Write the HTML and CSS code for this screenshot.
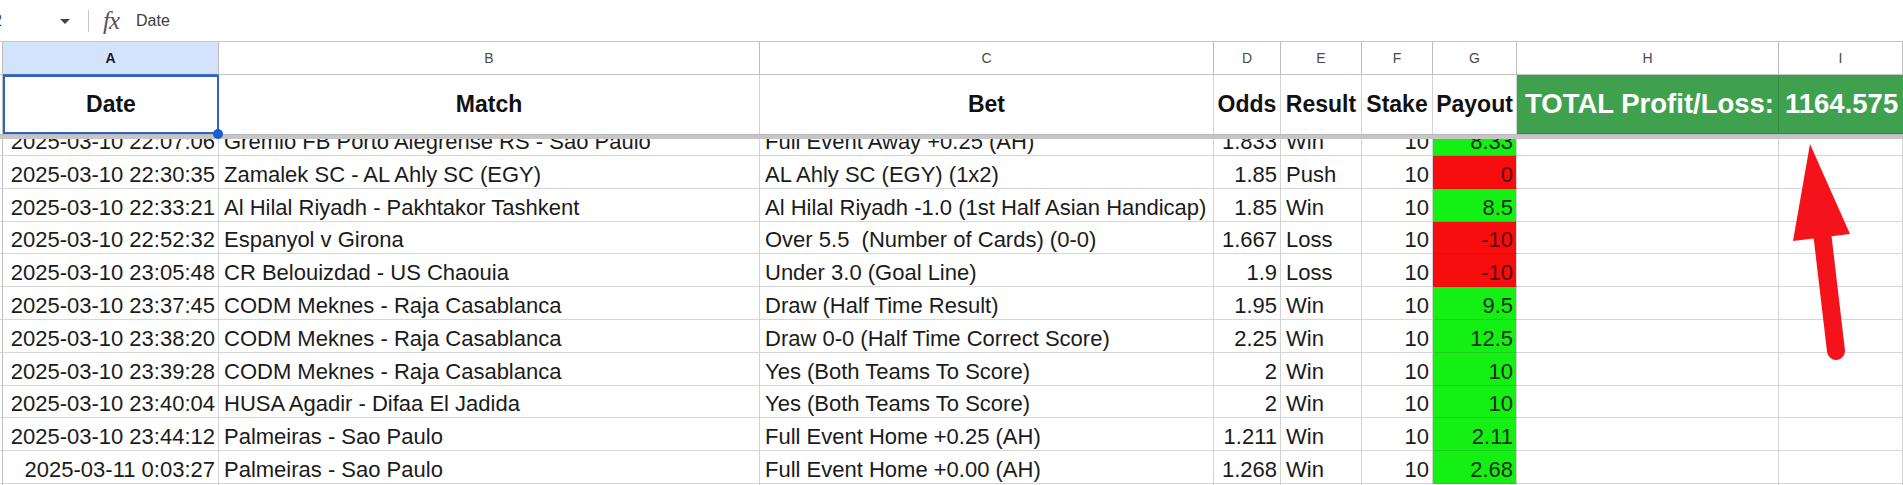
FILE: index.html
```html
<!DOCTYPE html>
<html>
<head>
<meta charset="utf-8">
<link rel="stylesheet" href="styles.css">
</head>
<body>
<div class="page">
  <div class="toolbar">
    <span class="namebox">2</span>
    <span class="caret"></span>
    <span class="vsep"></span>
    <span class="fx">fx</span>
    <span class="formula">Date</span>
  </div>

  <div class="row colhead">
    <div class="cell stub"></div>
    <div class="cell sel">A</div>
    <div class="cell">B</div>
    <div class="cell">C</div>
    <div class="cell">D</div>
    <div class="cell">E</div>
    <div class="cell">F</div>
    <div class="cell">G</div>
    <div class="cell">H</div>
    <div class="cell">I</div>
  </div>

  <div class="row head">
    <div class="cell stub"></div>
    <div class="cell active">Date<span class="handle"></span></div>
    <div class="cell">Match</div>
    <div class="cell">Bet</div>
    <div class="cell">Odds</div>
    <div class="cell">Result</div>
    <div class="cell">Stake</div>
    <div class="cell">Payout</div>
    <div class="cell total">TOTAL Profit/Loss:</div>
    <div class="cell total val">1164.575</div>
  </div>
  <div class="freeze"></div>

  <div class="body">
    <div class="row data first">
      <div class="cell stub"></div>
      <div class="cell r">2025-03-10 22:07:06</div>
      <div class="cell">Gremio FB Porto Alegrense RS - Sao Paulo</div>
      <div class="cell">Full Event Away +0.25 (AH)</div>
      <div class="cell r">1.833</div>
      <div class="cell">Win</div>
      <div class="cell r">10</div>
      <div class="cell r win">8.33</div>
      <div class="cell"></div>
      <div class="cell"></div>
    </div>
    <div class="row data">
      <div class="cell stub"></div>
      <div class="cell r">2025-03-10 22:30:35</div>
      <div class="cell">Zamalek SC - AL Ahly SC (EGY)</div>
      <div class="cell">AL Ahly SC (EGY) (1x2)</div>
      <div class="cell r">1.85</div>
      <div class="cell">Push</div>
      <div class="cell r">10</div>
      <div class="cell r lose">0</div>
      <div class="cell"></div>
      <div class="cell"></div>
    </div>
    <div class="row data">
      <div class="cell stub"></div>
      <div class="cell r">2025-03-10 22:33:21</div>
      <div class="cell">Al Hilal Riyadh - Pakhtakor Tashkent</div>
      <div class="cell">Al Hilal Riyadh -1.0 (1st Half Asian Handicap)</div>
      <div class="cell r">1.85</div>
      <div class="cell">Win</div>
      <div class="cell r">10</div>
      <div class="cell r win">8.5</div>
      <div class="cell"></div>
      <div class="cell"></div>
    </div>
    <div class="row data">
      <div class="cell stub"></div>
      <div class="cell r">2025-03-10 22:52:32</div>
      <div class="cell">Espanyol v Girona</div>
      <div class="cell">Over 5.5  (Number of Cards) (0-0)</div>
      <div class="cell r">1.667</div>
      <div class="cell">Loss</div>
      <div class="cell r">10</div>
      <div class="cell r lose">-10</div>
      <div class="cell"></div>
      <div class="cell"></div>
    </div>
    <div class="row data">
      <div class="cell stub"></div>
      <div class="cell r">2025-03-10 23:05:48</div>
      <div class="cell">CR Belouizdad - US Chaouia</div>
      <div class="cell">Under 3.0 (Goal Line)</div>
      <div class="cell r">1.9</div>
      <div class="cell">Loss</div>
      <div class="cell r">10</div>
      <div class="cell r lose">-10</div>
      <div class="cell"></div>
      <div class="cell"></div>
    </div>
    <div class="row data">
      <div class="cell stub"></div>
      <div class="cell r">2025-03-10 23:37:45</div>
      <div class="cell">CODM Meknes - Raja Casablanca</div>
      <div class="cell">Draw (Half Time Result)</div>
      <div class="cell r">1.95</div>
      <div class="cell">Win</div>
      <div class="cell r">10</div>
      <div class="cell r win">9.5</div>
      <div class="cell"></div>
      <div class="cell"></div>
    </div>
    <div class="row data">
      <div class="cell stub"></div>
      <div class="cell r">2025-03-10 23:38:20</div>
      <div class="cell">CODM Meknes - Raja Casablanca</div>
      <div class="cell">Draw 0-0 (Half Time Correct Score)</div>
      <div class="cell r">2.25</div>
      <div class="cell">Win</div>
      <div class="cell r">10</div>
      <div class="cell r win">12.5</div>
      <div class="cell"></div>
      <div class="cell"></div>
    </div>
    <div class="row data">
      <div class="cell stub"></div>
      <div class="cell r">2025-03-10 23:39:28</div>
      <div class="cell">CODM Meknes - Raja Casablanca</div>
      <div class="cell">Yes (Both Teams To Score)</div>
      <div class="cell r">2</div>
      <div class="cell">Win</div>
      <div class="cell r">10</div>
      <div class="cell r win">10</div>
      <div class="cell"></div>
      <div class="cell"></div>
    </div>
    <div class="row data">
      <div class="cell stub"></div>
      <div class="cell r">2025-03-10 23:40:04</div>
      <div class="cell">HUSA Agadir - Difaa El Jadida</div>
      <div class="cell">Yes (Both Teams To Score)</div>
      <div class="cell r">2</div>
      <div class="cell">Win</div>
      <div class="cell r">10</div>
      <div class="cell r win">10</div>
      <div class="cell"></div>
      <div class="cell"></div>
    </div>
    <div class="row data">
      <div class="cell stub"></div>
      <div class="cell r">2025-03-10 23:44:12</div>
      <div class="cell">Palmeiras - Sao Paulo</div>
      <div class="cell">Full Event Home +0.25 (AH)</div>
      <div class="cell r">1.211</div>
      <div class="cell">Win</div>
      <div class="cell r">10</div>
      <div class="cell r win">2.11</div>
      <div class="cell"></div>
      <div class="cell"></div>
    </div>
    <div class="row data">
      <div class="cell stub"></div>
      <div class="cell r">2025-03-11 0:03:27</div>
      <div class="cell">Palmeiras - Sao Paulo</div>
      <div class="cell">Full Event Home +0.00 (AH)</div>
      <div class="cell r">1.268</div>
      <div class="cell">Win</div>
      <div class="cell r">10</div>
      <div class="cell r win">2.68</div>
      <div class="cell"></div>
      <div class="cell"></div>
    </div>
    <div class="row data">
      <div class="cell stub"></div>
      <div class="cell"></div>
      <div class="cell"></div>
      <div class="cell"></div>
      <div class="cell"></div>
      <div class="cell"></div>
      <div class="cell"></div>
      <div class="cell"></div>
      <div class="cell"></div>
      <div class="cell"></div>
    </div>
  </div>

  <svg class="arrow" width="1903" height="485" viewBox="0 0 1903 485">
    <polygon points="1810,144 1793,241 1850,234" fill="#f4121b"/>
    <line x1="1822" y1="232" x2="1836" y2="351" stroke="#f4121b" stroke-width="18" stroke-linecap="round"/>
  </svg>
</div>
</body>
</html>
```

FILE: styles.css
```css
html, body {
  margin: 0;
  padding: 0;
  background: #ffffff;
}

.page {
  position: relative;
  width: 1903px;
  height: 485px;
  overflow: hidden;
  font-family: "Liberation Sans", Arial, sans-serif;
  color: #1b1b1b;
}

.toolbar {
  height: 41px;
  border-bottom: 1px solid #c4c7c5;
  display: flex;
  align-items: center;
  background: #ffffff;
}

.namebox {
  margin-left: -7px;
  width: 62px;
  font-size: 16px;
  color: #333;
}

.caret {
  width: 0;
  height: 0;
  border-left: 5px solid transparent;
  border-right: 5px solid transparent;
  border-top: 5px solid #444;
  margin-left: 5px;
  margin-top: 2px;
}

.vsep {
  width: 1px;
  height: 22px;
  background: #c4c7c5;
  margin-left: 18px;
}

.fx {
  font-family: "Liberation Serif", "DejaVu Serif", serif;
  font-style: italic;
  font-size: 25px;
  color: #555;
  margin-left: 14px;
  letter-spacing: -1px;
  line-height: 1;
}

.formula {
  margin-left: 17px;
  font-size: 16px;
  color: #3c3c3c;
}

.row {
  display: grid;
  grid-template-columns: 3px 216px 541px 454px 67px 81px 71px 84px 262px 1fr;
}

.cell {
  box-sizing: border-box;
  border-right: 1px solid #d3d3d3;
  border-bottom: 1px solid #d6d6d6;
  white-space: pre;
  overflow: hidden;
  position: relative;
}

.stub {
  border-right: 1px solid #c0c0c0;
}

/* column letters */
.colhead {
  height: 33px;
}
.colhead .cell {
  display: flex;
  align-items: center;
  justify-content: center;
  font-size: 14px;
  color: #4a4a4a;
  border-right: 1px solid #bdbdbd;
  border-bottom: 1px solid #c4c4c4;
}
.colhead .sel {
  background: #d3e3fd;
  color: #1a1a2a;
  font-weight: bold;
  border-bottom: 1px solid #4a72c0;
}

/* header row 1 */
.head {
  height: 59px;
}
.head .cell {
  display: flex;
  align-items: center;
  justify-content: center;
  font-size: 23px;
  font-weight: bold;
  color: #111;
  border-bottom: none;
  overflow: visible;
}
.head .active {
  border: 2px solid #2f62c4;
}
.handle {
  position: absolute;
  right: -6px;
  bottom: -7px;
  width: 10px;
  height: 10px;
  border-radius: 50%;
  background: #1a5fd0;
  z-index: 3;
}
.head .total {
  background: #3fa14d;
  color: #ffffff;
  font-size: 27.5px;
  justify-content: flex-start;
  padding-left: 8px;
  border-right: 1px solid #3a8a47;
  border-bottom: 1px solid #2f8a3e;
}
.head .total.val {
  padding-left: 6px;
  border-right: none;
}

.freeze {
  height: 5px;
  background: #c6c6c6;
  border-top: 1px solid #b8b8b8;
  box-sizing: border-box;
  position: relative;
  z-index: 2;
}

/* body rows */
.body {
  height: 346px;
  overflow: hidden;
}
.data {
  height: 32.8px;
}
.data.first {
  margin-top: -16px;
  height: 33px;
}
.data .cell {
  display: flex;
  align-items: flex-end;
  font-size: 22px;
  line-height: 25px;
  padding: 0 5px 1px 5px;
  color: #1b1b1b;
}
.data .stub {
  padding: 0;
}
.data .r {
  justify-content: flex-end;
  padding-right: 3px;
}
.data .win {
  background: #14f014;
  color: #1a2e1a;
  border-bottom-color: #1ed01e;
}
.data .lose {
  background: #f70d0d;
  color: #5a0a0a;
  border-bottom-color: #e01010;
}

.arrow {
  position: absolute;
  left: 0;
  top: 0;
  pointer-events: none;
}
```
